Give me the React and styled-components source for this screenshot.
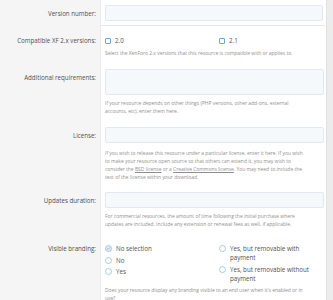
import React from "react";
import styled, { createGlobalStyle } from "styled-components";

const Global = createGlobalStyle`
  html, body { margin: 0; padding: 0; background: #ececec; }
  body { font-family: "Open Sans", "Noto Sans", sans-serif; }
`;

const Page = styled.div`
  display: flex;
  width: 333px;
  height: 300px;
  overflow: hidden;
`;

const Form = styled.div`
  flex: 1;
  display: flex;
  flex-direction: column;
  background: linear-gradient(to right, #f5f5f5 100px, #e9e9e9 100px, #e9e9e9 101px, #fff 101px);
`;

const Gutter = styled.div`
  width: 6px;
  background: #ececec;
  border-left: 1px solid #e2e2e2;
`;

const Row = styled.div`
  display: grid;
  grid-template-columns: 101px 1fr;
`;

const Label = styled.div`
  text-align: right;
  padding: ${(p) => p.$top}px 5px 0 0;
  font-size: 6.2px;
  line-height: 9px;
  color: #505050;
`;

const Field = styled.div`
  padding: ${(p) => p.$top}px 2px ${(p) => p.$bottom}px 4px;
  border-bottom: ${(p) => (p.$separated ? "1px solid #e6e6e6" : "none")};
  margin-right: ${(p) => (p.$separated ? "1px" : "0")};
`;

const Input = styled.div`
  height: ${(p) => p.$h}px;
  box-sizing: border-box;
  background: #f5f9fc;
  border: 1px solid #e1e8ef;
  border-radius: 2px;
`;

const Help = styled.div`
  margin-top: ${(p) => p.$mt}px;
  font-size: 4.95px;
  line-height: 8px;
  color: #8f8f8f;
`;

const Link = styled.span`
  text-decoration: underline;
`;

const Choices = styled.div`
  display: grid;
  grid-template-columns: 114px 1fr;
  padding-top: ${(p) => p.$top}px;
`;

const Col = styled.div`
  display: flex;
  flex-direction: column;
  gap: ${(p) => p.$gap}px;
`;

const Choice = styled.div`
  display: flex;
  align-items: flex-start;
  gap: 4px;
  font-size: 6.2px;
  line-height: 9px;
  color: #505050;
`;

const Box = styled.span`
  flex: none;
  width: 6px;
  height: 6px;
  margin-top: 1.5px;
  box-sizing: border-box;
  border: 1px solid #6aa6d8;
  border-radius: 1px;
`;

const RadioIcon = styled.svg`
  flex: none;
  width: 7px;
  height: 7px;
  margin-top: 1px;
`;

const Radio = ({ checked }) => (
  <RadioIcon viewBox="0 0 14 14">
    <circle cx="7" cy="7" r="6" fill={checked ? "#e4eef8" : "#fff"} stroke="#7fb0da" strokeWidth="1.3" />
    {checked && <path d="M4.2 7.2 L6.2 9.1 L9.9 5" fill="none" stroke="#6a9fce" strokeWidth="1.4" />}
  </RadioIcon>
);

export default function App() {
  return (
    <>
      <Global />
      <Page>
        <Form>
          <Row>
            <Label $top={9}>Version number:</Label>
            <Field $top={5} $bottom={4} $separated>
              <Input $h={16} />
            </Field>
          </Row>
          <Row>
            <Label $top={10}>Compatible XF 2.x versions:</Label>
            <Field $top={5} $bottom={7}>
              <Choices $top={5}>
                <Choice><Box />2.0</Choice>
                <Choice><Box />2.1</Choice>
              </Choices>
              <Help $mt={4}>Select the XenForo 2.x versions that this resource is compatible with or applies to.</Help>
            </Field>
          </Row>
          <Row>
            <Label $top={9}>Additional requirements:</Label>
            <Field $top={5} $bottom={7}>
              <Input $h={26} />
              <Help $mt={4}>
                If your resource depends on other things (PHP versions, other add-ons, external
                <br />
                accounts, etc), enter them here.
              </Help>
            </Field>
          </Row>
          <Row>
            <Label $top={9}>License:</Label>
            <Field $top={5} $bottom={6}>
              <Input $h={16} />
              <Help $mt={6}>
                If you wish to release this resource under a particular license, enter it here. If you wish
                <br />
                to make your resource open source so that others can extend it, you may wish to
                <br />
                consider the <Link>BSD license</Link> or a <Link>Creative Commons license</Link>. You may need to include the
                <br />
                text of the license within your download.
              </Help>
            </Field>
          </Row>
          <Row>
            <Label $top={9}>Updates duration:</Label>
            <Field $top={5} $bottom={7}>
              <Input $h={16} />
              <Help $mt={4}>
                For commercial resources, the amount of time following the initial purchase where
                <br />
                updates are included. Include any extension or renewal fees as well, if applicable.
              </Help>
            </Field>
          </Row>
          <Row>
            <Label $top={9}>Visible branding:</Label>
            <Field $top={5} $bottom={6}>
              <Choices $top={4}>
                <Col $gap={2.5}>
                  <Choice><Radio checked />No selection</Choice>
                  <Choice><Radio />No</Choice>
                  <Choice><Radio />Yes</Choice>
                </Col>
                <Col $gap={3}>
                  <Choice><Radio /><span>Yes, but removable with<br />payment</span></Choice>
                  <Choice><Radio /><span>Yes, but removable without<br />payment</span></Choice>
                </Col>
              </Choices>
              <Help $mt={3}>
                Does your resource display any branding visible to an end user when it's enabled or in
                <br />
                use?
              </Help>
            </Field>
          </Row>
        </Form>
        <Gutter />
      </Page>
    </>
  );
}
